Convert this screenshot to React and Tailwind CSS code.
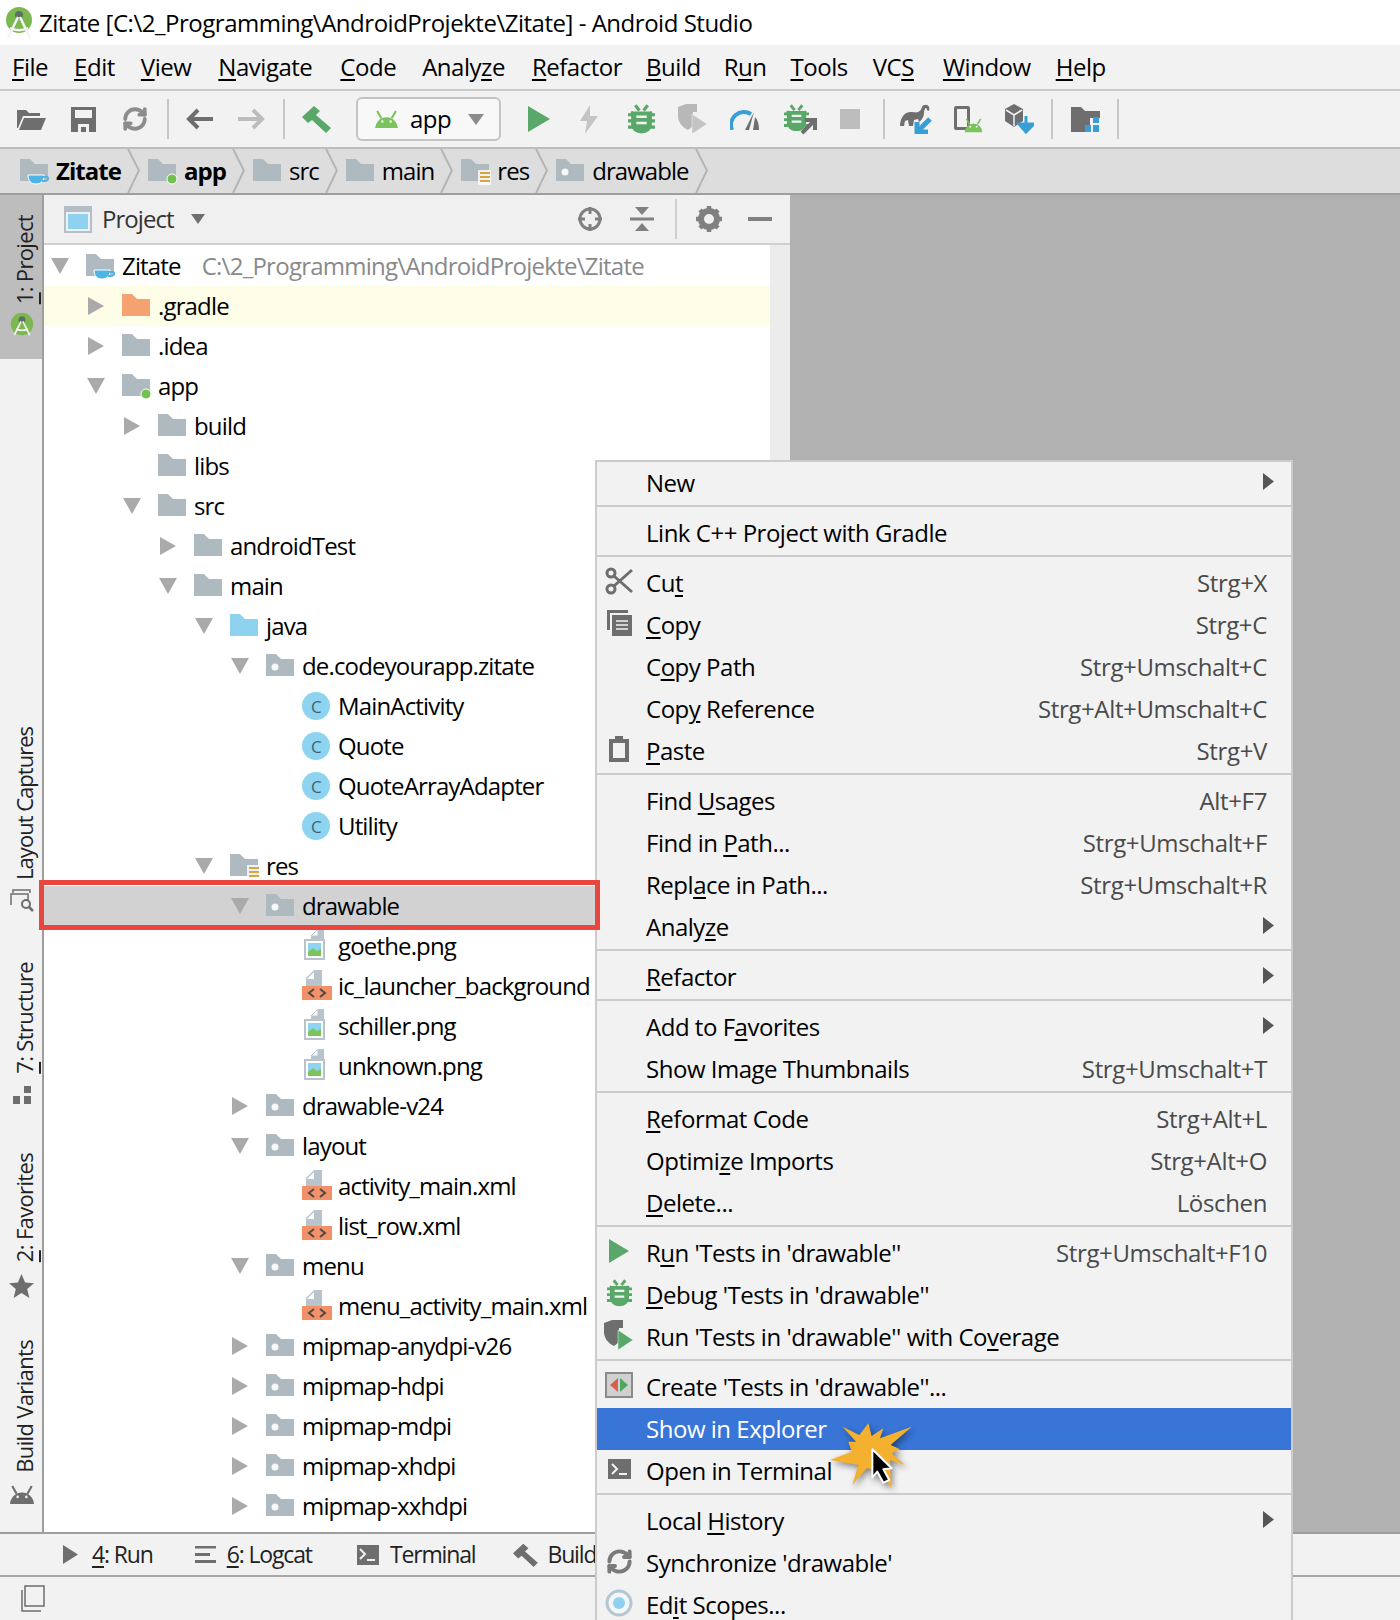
import { RefreshCw } from 'lucide-react';

const GRAY = '#6e6e6e';
const GREEN = '#59a869';
const BLUE = '#389fd6';
const DROID = '#7bc45c';

// "Cu&t" puts the underline under the letter after the &
const Label = ({ text }) => {
  const i = text.indexOf('&');
  if (i < 0) return <>{text}</>;
  return (
    <>
      {text.slice(0, i)}
      <u className="underline decoration-2 underline-offset-[3px]">{text[i + 1]}</u>
      {text.slice(i + 2)}
    </>
  );
};

const Folder = ({ color = '#afb9c0', dot, children }) => (
  <svg width="30" height="28" viewBox="0 0 30 28" className="shrink-0">
    <path d="M0 2h10l5 5h13v17H0z" fill={color} />
    {dot && <circle cx="9" cy="15" r="3.5" fill="#fff" opacity="0.9" />}
    {children}
  </svg>
);

const Cup = () => (
  <g>
    <path d="M8 18h16c0 6-3 9-8 9s-8-3-8-9z" fill="#4db4e4" stroke="#fff" strokeWidth="1" />
    <path d="M23 20h4c1.500 0 2 3-1 4h-4" fill="none" stroke="#4db4e4" strokeWidth="1.800" />
  </g>
);
const GreenDot = () => <circle cx="24" cy="22" r="5" fill="#72c04e" stroke="#fff" strokeWidth="1" />;
const Lines = () => (
  <g>
    <rect x="17" y="13" width="13" height="15" fill="#fff" opacity="0.8" />
    <path d="M19 16h10M19 20h10M19 24h10" stroke="#d9a343" strokeWidth="2" />
  </g>
);

const ZitateFolder = () => <Folder><Cup /></Folder>;
const AppFolder = () => <Folder><GreenDot /></Folder>;
const ResFolder = () => <Folder><Lines /></Folder>;

const ClassIcon = () => (
  <span className="flex h-[28px] w-[28px] shrink-0 items-center justify-center rounded-full bg-[#8ed4f0] text-[17px] leading-none text-[#3d6473]">C</span>
);

const PngIcon = () => (
  <svg width="30" height="32" viewBox="0 0 30 32" className="shrink-0 -translate-y-[1px]">
    <path d="M9 8l8-8h5v14H9z" fill="#b9c3cb" />
    <path d="M9 7l7-7v7z" fill="#fff" stroke="#b9c3cb" />
    <rect x="3" y="11" width="19" height="19" fill="#fff" stroke="#b9c3cb" strokeWidth="2" />
    <rect x="6" y="14" width="13" height="13" fill="#8ed4f0" />
    <path d="M6 27v-4l5-4 4 3 4-2v7z" fill="#7bc45c" />
  </svg>
);

const XmlIcon = () => (
  <svg width="32" height="32" viewBox="0 0 32 32" className="shrink-0">
    <path d="M12 0h8v16H4V8z" fill="#b9c3cb" />
    <path d="M12 2v7H5z" fill="#fff" />
    <rect x="0" y="16" width="30" height="14" fill="#f39067" />
    <path d="M12 19l-5 4 5 4M18 19l5 4-5 4" fill="none" stroke="#4a4a4a" strokeWidth="2" />
  </svg>
);

const Android = ({ color = DROID, w = 24 }) => (
  <svg width={w} viewBox="0 0 24 18" className="shrink-0">
    <path d="M1 18a11 11 0 0 1 22 0z" fill={color} />
    <path d="M7 8L3 1M17 8l4-7" stroke={color} strokeWidth="2" />
    <circle cx="8" cy="11" r="1.200" fill="#f2f2f2" />
    <circle cx="16" cy="11" r="1.200" fill="#f2f2f2" />
  </svg>
);

const StudioLogo = () => (
  <svg width="28" height="32" viewBox="0 0 28 32" className="shrink-0">
    <circle cx="14" cy="13" r="13" fill="#7cb850" />
    <circle cx="14" cy="8" r="4" fill="#5f6f5f" />
    <path d="M13 10L3 31M15 10l10 21M5 21c6 3 12 3 18 0" stroke="#f4f4f4" strokeWidth="2.500" fill="none" />
  </svg>
);

const Bug = ({ color = GREEN, w = 27 }) => (
  <svg width={w} height={w * 1.1} viewBox="0 0 26 28" className="shrink-0">
    <path d="M7 1l4 5M19 1l-4 5" stroke={color} strokeWidth="3" />
    <path d="M5 7h16a1 1 0 0 1 2 2v11a10 8 0 0 1-20 0V9a1 1 0 0 1 2-2z" fill={color} />
    <path d="M0 10h26M0 16h26M0 22h26" stroke={color} strokeWidth="3" />
    <path d="M8 12h10M8 18h10" stroke="#f2f2f2" strokeWidth="2.500" />
  </svg>
);

const Coverage = ({ shield = '#b8b8b8', play = '#c4c4c4' }) => (
  <svg width="32" height="30" viewBox="0 0 32 30" className="shrink-0">
    <path d="M1 3l8-3h11v8h-4v14l-5 4c-6-3-10-8-10-14z" fill={shield} />
    <path d="M15 10l15 10-15 10z" fill={play} stroke="#f2f2f2" strokeWidth="0.500" />
  </svg>
);

const Sep = ({ className = '' }) => <div className={`h-[40px] w-[2px] shrink-0 bg-[#c6c6c6] ${className}`} />;
const Tool = ({ children, className = '' }) => (
  <div className={`flex w-[52px] shrink-0 items-center justify-center ${className}`}>{children}</div>
);

const Toolbar = () => (
  <div className="flex h-[58px] items-center border-b-2 border-[#bdbdbd] bg-[#f2f2f2] pl-[5px]">
    <Tool>
      <svg width="29" height="22" viewBox="0 0 29 22"><path d="M0 2h9l3 3h11v3H6L1 20H0z" fill={GRAY} /><path d="M7 10h22l-5 12H2z" fill={GRAY} /></svg>
    </Tool>
    <Tool>
      <svg width="25" height="25" viewBox="0 0 25 25"><path d="M0 0h25v25H0z" fill={GRAY} /><rect x="4" y="3" width="17" height="8" fill="#f2f2f2" /><rect x="7" y="17" width="11" height="8" fill="#f2f2f2" /><rect x="10" y="20" width="5" height="5" fill={GRAY} /></svg>
    </Tool>
    <Tool><RefreshCw size={26} strokeWidth={3.5} color="#8c8c8c" /></Tool>
    <Sep className="ml-[6px]" />
    <Tool className="ml-[4px]">
      <svg width="27" height="22" viewBox="0 0 27 22"><path d="M27 11H3M12 2l-9 9 9 9" fill="none" stroke={GRAY} strokeWidth="4" /></svg>
    </Tool>
    <Tool>
      <svg width="27" height="22" viewBox="0 0 27 22"><path d="M0 11h24M15 2l9 9-9 9" fill="none" stroke="#bdbdbd" strokeWidth="4" /></svg>
    </Tool>
    <Sep className="ml-[6px]" />
    <Tool className="ml-[5px]">
      <svg width="30" height="28" viewBox="0 0 30 28"><path d="M1 12L13 1l6 5-4 4 15 13-5 5-14-13-4 3z" fill={GREEN} /></svg>
    </Tool>
    <div className="ml-[14px] flex h-[44px] w-[145px] shrink-0 items-center rounded-[6px] border-2 border-[#c4c4c4] bg-[#f8f8f8] pl-[16px]">
      <Android w={25} />
      <span className="ml-[11px] text-[24px] leading-none text-black">app</span>
      <svg width="16" height="11" viewBox="0 0 16 11" className="ml-[17px]"><path d="M0 0h16l-8 11z" fill="#8c8c8c" /></svg>
    </div>
    <Tool className="ml-[12px]"><svg width="22" height="26" viewBox="0 0 22 26"><path d="M0 0l22 13L0 26z" fill={GREEN} /></svg></Tool>
    <Tool className="-ml-[2px]"><svg width="20" height="29" viewBox="0 0 20 29"><path d="M11 0L1 16h7L6 29l13-18h-8z" fill="#c4c4c4" /></svg></Tool>
    <Tool><Bug /></Tool>
    <Tool><Coverage /></Tool>
    <Tool>
      <svg width="30" height="22" viewBox="0 0 30 22"><path d="M2 22a13 13 0 0 1 19-16" fill="none" stroke={BLUE} strokeWidth="4" /><path d="M24 4l-9 18h4zM25 9c3 3 4 8 4 13h-6z" fill={GRAY} /></svg>
    </Tool>
    <Tool className="ml-[2px]">
      <div className="relative h-[31px] w-[30px]">
        <Bug w={25} />
        <svg width="18" height="18" viewBox="0 0 18 18" className="absolute bottom-0 right-[-4px]"><path d="M2 16L14 4M5 3h10v10" fill="none" stroke={GRAY} strokeWidth="4" /></svg>
      </div>
    </Tool>
    <Tool className="-ml-[1px]"><div className="h-[20px] w-[20px] bg-[#bdbdbd]" /></Tool>
    <Sep className="ml-[7px]" />
    <Tool className="ml-[5px]">
      <svg width="32" height="30" viewBox="0 0 32 30"><path d="M0 23C0 14 4 8 11 8c3 0 5 1 7 0 3-1 3-3 4-5 1-3 6-3 7 0 1 2 0 4-1 4s-1-3-2-3-2 2-2 5c0 4-3 8-5 9l-1-3-4 1-1 6H9l-1-6-3 1-1 5H0z" fill={GRAY} /><path d="M30 15L18 27M17 18v10h11" fill="none" stroke={BLUE} strokeWidth="5" /></svg>
    </Tool>
    <Tool className="-ml-[1px]">
      <div className="relative h-[27px] w-[26px]">
        <div className="h-[24px] w-[16px] rounded-[2px] border-[3px] border-[#6e6e6e]" />
        <div className="absolute bottom-0 right-[-3px]"><Android w={19} /></div>
      </div>
    </Tool>
    <Tool>
      <svg width="30" height="30" viewBox="0 0 30 30"><path d="M10 0l9 5v12l-9 6-9-6V5z" fill={GRAY} /><path d="M2 6l8 5 8-5M10 11v11" stroke="#f2f2f2" strokeWidth="1.500" fill="none" /><path d="M22 12v13M15 20l7 8 8-8z" fill={BLUE} stroke={BLUE} strokeWidth="3" /></svg>
    </Tool>
    <Sep className="ml-[6px]" />
    <Tool className="ml-[6px]">
      <svg width="29" height="25" viewBox="0 0 29 25"><path d="M0 0h10l4 4h15v7h-10v14H0z" fill={GRAY} /><path d="M22 10h6v6h-6zM14 18h6v7h-6zM22 18h6v7h-6z" fill={BLUE} /></svg>
    </Tool>
    <Sep className="ml-[6px]" />
  </div>
);

const Crumb = ({ icon, text, bold }) => (
  <div className="flex h-full shrink-0 items-center">
    {icon}
    <span className={`ml-[6px] text-[24px] leading-none tracking-[-0.04em] text-black ${bold ? 'font-bold' : ''}`}>{text}</span>
    <svg width="14" height="44" viewBox="0 0 14 45" className="ml-[6px]"><path d="M1 0l11 22L1 45" fill="none" stroke="#b4b4b4" strokeWidth="2" /></svg>
  </div>
);

const Breadcrumbs = () => (
  <div className="flex h-[44px] items-center gap-[7px] bg-[#dddddd] pl-[20px]">
    <Crumb icon={<ZitateFolder />} text="Zitate" bold />
    <Crumb icon={<AppFolder />} text="app" bold />
    <Crumb icon={<Folder />} text="src" />
    <Crumb icon={<Folder />} text="main" />
    <Crumb icon={<ResFolder />} text="res" />
    <Crumb icon={<Folder dot />} text="drawable" />
  </div>
);

const Vertical = ({ children, tight }) => (
  <span className={`translate-x-[2px] rotate-180 text-[22px] leading-none text-[#222] [writing-mode:vertical-rl] ${tight ? 'tracking-[-0.045em]' : 'tracking-[-0.03em]'}`}>{children}</span>
);

const SideGroup = ({ height, text, icon, tight }) => (
  <div className={`flex flex-col items-center justify-end ${tight ? 'gap-[9px]' : 'gap-[12px]'} ${height}`}>
    <Vertical tight={tight}><Label text={text} /></Vertical>
    {icon}
  </div>
);

const SideBar = () => (
  <div className="flex w-[44px] shrink-0 flex-col border-r-2 border-[#9e9e9e] bg-[#f2f2f2] pl-[1px]">
    <div className="-ml-[1px] flex h-[164px] flex-col items-center justify-end gap-[8px] bg-[#bdbdbd] pb-[23px] pl-[1px]">
      <Vertical><Label text="&1: Project" /></Vertical>
      <svg width="24" height="24" viewBox="0 0 28 28"><circle cx="14" cy="14" r="13" fill="#7cb850" /><circle cx="14" cy="9" r="4" fill="#5f6f5f" /><path d="M13 11L5 27M15 11l8 16M7 20c5 2 9 2 14 0" stroke="#f2f2f2" strokeWidth="2" fill="none" /></svg>
    </div>
    <SideGroup
      tight
      height="h-[553px]"
      text="Layout Captures"
      icon={<svg width="24" height="23" viewBox="0 0 24 23"><path d="M3 4V1h17v3M1 16V5h17v6" fill="none" stroke={GRAY} strokeWidth="1.500" /><circle cx="16" cy="15" r="4" fill="none" stroke={GRAY} strokeWidth="2" /><path d="M19 18l4 4" stroke={GRAY} strokeWidth="2.500" /></svg>}
    />
    <SideGroup
      height="h-[192px]"
      text="&7: Structure"
      icon={<svg width="18" height="18" viewBox="0 0 18 18"><path d="M11 0h7v7h-7zM0 10h7v8H0zM11 10h7v8h-7z" fill={GRAY} /></svg>}
    />
    <SideGroup
      height="h-[194px]"
      text="&2: Favorites"
      icon={<svg width="25" height="24" viewBox="0 0 25 24"><path d="M12.500 0l3.600 8.600 8.900.6-6.800 5.800 2.200 9-7.900-5-7.900 5 2.200-9L0 9.200l8.900-.6z" fill={GRAY} /></svg>}
    />
    <SideGroup
      height="h-[206px]"
      text="Build Variants"
      icon={<Android color={GRAY} w={26} />}
    />
  </div>
);

const rows = [
  [0, 'down', <ZitateFolder />, 'Zitate', 'C:\\2_Programming\\AndroidProjekte\\Zitate'],
  [1, 'right', <Folder color="#f4a26f" />, '.gradle'],
  [1, 'right', <Folder />, '.idea'],
  [1, 'down', <AppFolder />, 'app'],
  [2, 'right', <Folder />, 'build'],
  [2, null, <Folder />, 'libs'],
  [2, 'down', <Folder />, 'src'],
  [3, 'right', <Folder />, 'androidTest'],
  [3, 'down', <Folder />, 'main'],
  [4, 'down', <Folder color="#8fd2ef" />, 'java'],
  [5, 'down', <Folder dot />, 'de.codeyourapp.zitate'],
  [6, null, <ClassIcon />, 'MainActivity'],
  [6, null, <ClassIcon />, 'Quote'],
  [6, null, <ClassIcon />, 'QuoteArrayAdapter'],
  [6, null, <ClassIcon />, 'Utility'],
  [4, 'down', <ResFolder />, 'res'],
  [5, 'down', <Folder dot />, 'drawable'],
  [6, null, <PngIcon />, 'goethe.png'],
  [6, null, <XmlIcon />, 'ic_launcher_background'],
  [6, null, <PngIcon />, 'schiller.png'],
  [6, null, <PngIcon />, 'unknown.png'],
  [5, 'right', <Folder dot />, 'drawable-v24'],
  [5, 'down', <Folder dot />, 'layout'],
  [6, null, <XmlIcon />, 'activity_main.xml'],
  [6, null, <XmlIcon />, 'list_row.xml'],
  [5, 'down', <Folder dot />, 'menu'],
  [6, null, <XmlIcon />, 'menu_activity_main.xml'],
  [5, 'right', <Folder dot />, 'mipmap-anydpi-v26'],
  [5, 'right', <Folder dot />, 'mipmap-hdpi'],
  [5, 'right', <Folder dot />, 'mipmap-mdpi'],
  [5, 'right', <Folder dot />, 'mipmap-xhdpi'],
  [5, 'right', <Folder dot />, 'mipmap-xxhdpi'],
];

const TreeRow = ({ row, index }) => {
  const [level, arrow, icon, text, sub] = row;
  let bg = '';
  if (index === 1) bg = 'bg-[#fdfde8]';
  if (index === 16) bg = 'bg-[#d2d2d2]';
  return (
    <div className={`flex h-[40px] items-center whitespace-nowrap ${bg}`} style={{ paddingLeft: level * 36 }}>
      <div className="flex w-[32px] shrink-0 justify-center">
        {arrow === 'down' && <svg width="18" height="16" viewBox="0 0 18 16"><path d="M0 0h18L9 16z" fill="#aaaaaa" /></svg>}
        {arrow === 'right' && <svg width="16" height="18" viewBox="0 0 16 18"><path d="M0 0l16 9-16 9z" fill="#aaaaaa" /></svg>}
      </div>
      <div className="flex w-[46px] shrink-0 items-center pl-[10px]">{icon}</div>
      <span className="text-[24px] leading-none tracking-[-0.035em] text-black">{text}</span>
      {sub && <span className="ml-[21px] text-[24px] leading-none tracking-[-0.031em] text-[#8a8a8a]">{sub}</span>}
    </div>
  );
};

const ProjectPanel = () => (
  <div className="flex w-[746px] shrink-0 flex-col">
    <div className="flex h-[50px] shrink-0 items-center border-b-2 border-[#d0d0d0] bg-[#f0f0f0] pl-[20px]">
      <svg width="28" height="27" viewBox="0 0 28 27" className="shrink-0"><rect width="28" height="27" fill="#b4bec6" /><rect x="2" y="6" width="24" height="19" fill="#eef2f4" /><rect x="4" y="8" width="20" height="15" fill="#8fd2ef" /></svg>
      <span className="ml-[10px] text-[24px] leading-none tracking-[-0.04em] text-[#333]">Project</span>
      <svg width="14" height="10" viewBox="0 0 14 10" className="ml-[17px]"><path d="M0 0h14L7 10z" fill={GRAY} /></svg>
      <svg width="24" height="24" viewBox="0 0 24 24" className="ml-[373px]"><circle cx="12" cy="12" r="10" fill="none" stroke="#808080" strokeWidth="3" /><path d="M12 0v7M12 17v7M0 12h7M17 12h7" stroke="#808080" strokeWidth="3" /></svg>
      <svg width="24" height="24" viewBox="0 0 24 24" className="ml-[28px]"><path d="M0 12h24" stroke="#808080" strokeWidth="3" /><path d="M5 0h14l-7 8zM5 24h14l-7-8z" fill="#808080" /></svg>
      <div className="ml-[21px] h-[40px] w-[2px] bg-[#cfcfcf]" />
      <svg width="26" height="26" viewBox="0 0 26 26" className="ml-[19px]"><circle cx="13" cy="13" r="8" fill="none" stroke="#808080" strokeWidth="6" /><path d="M13 0v6M13 20v6M0 13h6M20 13h6M4 4l4 4M18 18l4 4M4 22l4-4M18 8l4-4" stroke="#808080" strokeWidth="4.500" /></svg>
      <div className="ml-[26px] h-[4px] w-[24px] bg-[#808080]" />
    </div>
    <div className="flex flex-1">
      <div className="flex w-[726px] flex-col overflow-hidden bg-white pt-[1px]">
        {rows.map((row, i) => <TreeRow key={row[3]} row={row} index={i} />)}
      </div>
      <div className="w-[20px] bg-[#ececec]" />
    </div>
  </div>
);

const menu = [
  [{ t: 'New', sub: true }],
  [{ t: 'Link C++ Project with Gradle' }],
  [
    {
      t: 'Cu&t', k: 'Strg+X',
      icon: <svg width="28" height="28" viewBox="0 0 28 28"><circle cx="6" cy="6" r="4" fill="none" stroke={GRAY} strokeWidth="3" /><circle cx="6" cy="22" r="4" fill="none" stroke={GRAY} strokeWidth="3" /><path d="M9 9l18 16M9 19L27 3" stroke={GRAY} strokeWidth="3" /></svg>,
    },
    {
      t: '&Copy', k: 'Strg+C',
      icon: <svg width="25" height="26" viewBox="0 0 25 26"><path d="M0 0h21v3H3v17H0z" fill={GRAY} /><rect x="5" y="5" width="20" height="21" fill={GRAY} /><path d="M9 11h12M9 15h12M9 19h12" stroke="#f2f2f2" strokeWidth="1.500" /></svg>,
    },
    { t: 'C&opy Path', k: 'Strg+Umschalt+C' },
    { t: 'Cop&y Reference', k: 'Strg+Alt+Umschalt+C' },
    {
      t: '&Paste', k: 'Strg+V',
      icon: <svg width="20" height="26" viewBox="0 0 20 26"><path d="M0 3h6V0h8v3h6v23H0z" fill={GRAY} /><rect x="4" y="7" width="12" height="15" fill="#f2f2f2" /></svg>,
    },
  ],
  [
    { t: 'Find &Usages', k: 'Alt+F7' },
    { t: 'Find in &Path...', k: 'Strg+Umschalt+F' },
    { t: 'Repl&ace in Path...', k: 'Strg+Umschalt+R' },
    { t: 'Analy&ze', sub: true },
  ],
  [{ t: '&Refactor', sub: true }],
  [
    { t: 'Add to F&avorites', sub: true },
    { t: 'Show Image Thumbnails', k: 'Strg+Umschalt+T' },
  ],
  [
    { t: '&Reformat Code', k: 'Strg+Alt+L' },
    { t: 'Optimi&ze Imports', k: 'Strg+Alt+O' },
    { t: '&Delete...', k: 'Löschen' },
  ],
  [
    {
      t: "R&un 'Tests in 'drawable''", k: 'Strg+Umschalt+F10',
      icon: <svg width="20" height="24" viewBox="0 0 20 24"><path d="M0 0l20 12L0 24z" fill={GREEN} /></svg>,
    },
    { t: "&Debug 'Tests in 'drawable''", icon: <Bug w={25} /> },
    {
      t: "Run 'Tests in 'drawable'' with Co&verage",
      icon: <Coverage shield={GRAY} play={GREEN} />,
    },
  ],
  [
    {
      t: "Create 'Tests in 'drawable''...",
      icon: <svg width="28" height="26" viewBox="0 0 28 26"><rect x="1" y="1" width="26" height="24" fill="#d0d0d0" stroke="#8a8a8a" strokeWidth="2" /><path d="M13 6v14L5 13z" fill="#d9604c" /><path d="M15 6v14l8-7z" fill="#4ca85f" /></svg>,
    },
    { t: 'Show in Explorer', active: true },
    {
      t: 'Open in Terminal',
      icon: <svg width="23" height="20" viewBox="0 0 23 20"><rect width="23" height="20" fill={GRAY} /><path d="M4 5l5 5-5 5" fill="none" stroke="#f2f2f2" strokeWidth="2" /><path d="M11 15h8" stroke="#f2f2f2" strokeWidth="2" /></svg>,
    },
  ],
  [
    { t: 'Local &History', sub: true },
    { t: "Synchronize 'drawable'", icon: <RefreshCw size={27} strokeWidth={3.5} color="#7a7a7a" /> },
    {
      t: 'Ed&it Scopes...',
      icon: <svg width="28" height="28" viewBox="0 0 28 28"><circle cx="14" cy="14" r="12" fill="#f4f6f7" stroke="#b5c7d3" strokeWidth="3" /><circle cx="14" cy="14" r="6" fill="#8fd2ef" /></svg>,
    },
  ],
];

const MenuItem = ({ item }) => (
  <div className={`flex h-[42px] items-center whitespace-nowrap pr-[24px] text-[24px] leading-none ${item.active ? 'bg-[#3875d7] text-white' : 'text-black'}`}>
    <div className="flex w-[44px] shrink-0 items-center justify-center -translate-y-[2px]">{item.icon}</div>
    <span className="ml-[5px]"><Label text={item.t} /></span>
    {item.k && <span className="ml-auto tracking-[-0.015em] text-[#4a4a4a]">{item.k}</span>}
    {item.sub && (
      <svg width="11" height="17" viewBox="0 0 11 17" className="ml-auto -mr-[7px] -translate-y-[2px]"><path d="M0 0l11 8.500L0 17z" fill="#555555" /></svg>
    )}
  </div>
);

const ContextMenu = () => (
  <div className="absolute left-[595px] top-[460px] h-[1160px] w-[698px] overflow-hidden border-x-2 border-t-2 border-x-[#cccccc] border-t-[#cccccc] bg-[#f2f2f2]">
    {menu.map((group, i) => (
      <div key={group[0].t}>
        {i > 0 && <div className="mb-[5px] mt-[1px] h-[2px] bg-[#cccccc]" />}
        {group.map((item) => <MenuItem key={item.t} item={item} />)}
      </div>
    ))}
  </div>
);

const Burst = () => (
  <svg width="120" height="100" viewBox="0 0 360 300" className="absolute left-[820px] top-[1400px] drop-shadow-[2px_3px_3px_rgba(0,0,0,0.45)]">
    <path d="M68 80L118 105 145 70 155 108 190 85 180 115 275 80 212 135 240 148 215 160 255 195 210 180 213 265 180 210 140 205 97 255 115 195 30 180 95 155 85 125 108 125z" fill="#f4b02f" />
    <path d="M157 148L215 205 190 208 208 240 190 248 172 215 157 232z" fill="#000" stroke="#fff" strokeWidth="6" strokeLinejoin="round" />
  </svg>
);

const BottomTool = ({ icon, text, className = '', gap }) => (
  <div className={`flex shrink-0 items-center whitespace-nowrap text-[23px] leading-none tracking-[-0.05em] text-[#222] ${className}`}>
    {icon}
    <span className={gap}><Label text={text} /></span>
  </div>
);

const menuBar = [
  ['&File', ''],
  ['&Edit', ''],
  ['&View', ''],
  ['&Navigate', 'ml-[1px]'],
  ['&Code', 'ml-[2px]'],
  ['Analy&ze', ''],
  ['&Refactor', 'ml-[1px]'],
  ['&Build', '-ml-[2px]'],
  ['R&un', '-ml-[3px]'],
  ['&Tools', '-ml-[2px]'],
  ['VC&S', '-ml-[1px]'],
  ['&Window', 'ml-[3px]'],
  ['&Help', '-ml-[1px]'],
];

export default function App() {
  return (
    <div className="relative h-[1620px] w-[1400px] overflow-hidden bg-[#f2f2f2] font-['Open_Sans',sans-serif] tracking-[-0.03em]">
      <div className="flex h-[45px] items-center bg-white pl-[5px]">
        <StudioLogo />
        <span className="ml-[6px] text-[24px] leading-none text-black">Zitate [C:\2_Programming\AndroidProjekte\Zitate] - Android Studio</span>
      </div>

      <div className="flex h-[46px] items-center gap-[26px] border-b-2 border-[#c9c9c9] bg-[#f2f2f2] pl-[12px] text-[24px] leading-none text-black">
        {menuBar.map(([m, extra]) => (
          <span key={m} className={extra}><Label text={m} /></span>
        ))}
      </div>

      <Toolbar />
      <Breadcrumbs />

      <div className="flex h-[1341px] border-y-2 border-[#9e9e9e]">
        <SideBar />
        <ProjectPanel />
        <div className="flex-1 bg-[#b1b1b1]" />
      </div>

      <div className="flex h-[43px] items-center border-b-2 border-[#a8a8a8] pl-[63px]">
        <BottomTool icon={<svg width="15" height="19" viewBox="0 0 15 19"><path d="M0 0l15 9.500L0 19z" fill={GRAY} /></svg>} text="&4: Run" gap="ml-[14px]" />
        <BottomTool icon={<svg width="21" height="17" viewBox="0 0 21 17"><path d="M0 1h21M0 8.500h15M0 15.500h21" stroke={GRAY} strokeWidth="3" /></svg>} text="&6: Logcat" className="ml-[42px]" gap="ml-[11px]" />
        <BottomTool icon={<svg width="22" height="20" viewBox="0 0 22 20"><rect width="22" height="20" fill={GRAY} /><path d="M3 4l5 5-5 5" fill="none" stroke="#f2f2f2" strokeWidth="2" /><path d="M10 15h8" stroke="#f2f2f2" strokeWidth="2" /></svg>} text="Terminal" className="ml-[45px]" gap="ml-[11px]" />
        <BottomTool icon={<svg width="26" height="24" viewBox="0 0 30 28"><path d="M1 12L13 1l6 5-4 4 15 13-5 5-14-13-4 3z" fill={GRAY} /></svg>} text="Build" className="ml-[37px]" gap="ml-[9px]" />
      </div>

      <div className="flex h-[43px] items-center pl-[21px]">
        <svg width="24" height="27" viewBox="0 0 24 27"><path d="M4 1h19v20H4z" fill="none" stroke={GRAY} strokeWidth="1.500" /><path d="M1 5v21h19" fill="none" stroke={GRAY} strokeWidth="1.500" /></svg>
      </div>

      <ContextMenu />
      <div className="absolute left-[39px] top-[880px] h-[50px] w-[561px] border-[5px] border-[#e8473f]" />
      <Burst />
    </div>
  );
}
